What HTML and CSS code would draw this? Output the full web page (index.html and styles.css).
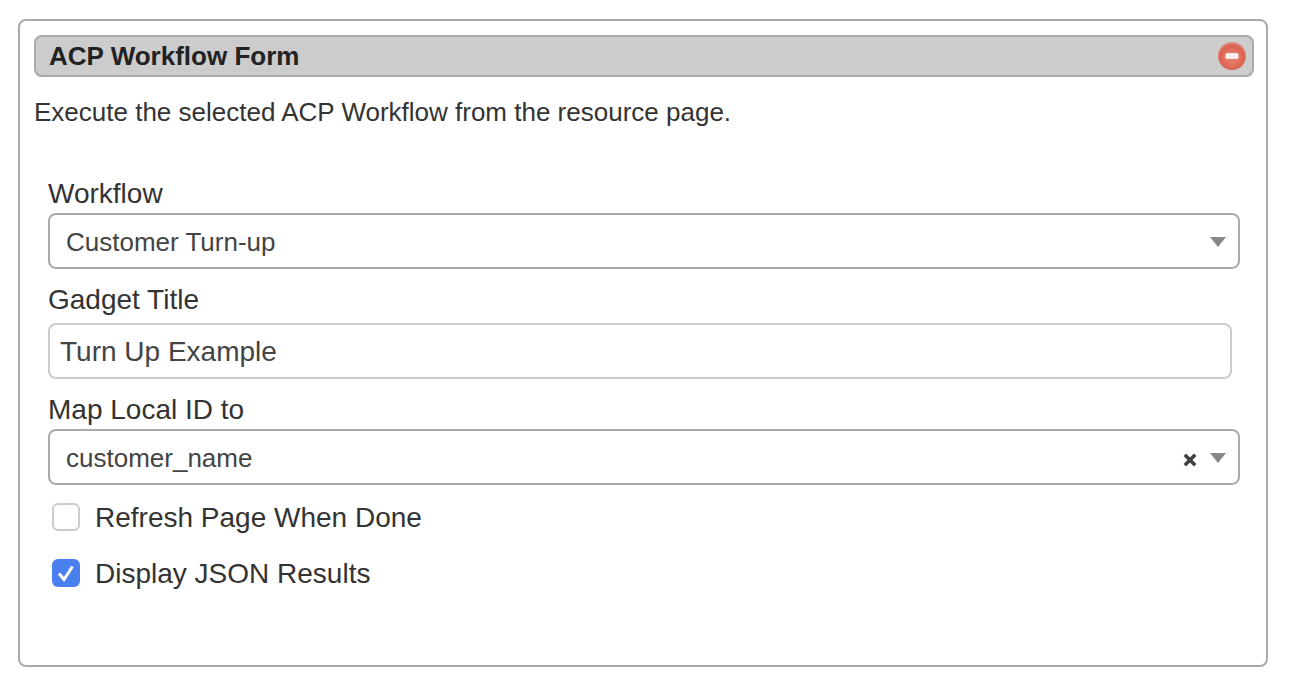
FILE: index.html
```html
<!DOCTYPE html>
<html lang="en">
<head>
<meta charset="utf-8">
<title>ACP Workflow Form</title>
<link rel="stylesheet" href="styles.css">
</head>
<body>
<section class="panel">
  <header class="panel-head">
    <h1 class="panel-title">ACP Workflow Form</h1>
    <svg class="remove" width="28" height="28" viewBox="0 0 28 28" aria-hidden="true">
      <defs>
        <radialGradient id="rg" cx="50%" cy="55%" r="52%">
          <stop offset="0" stop-color="#ec8272"/>
          <stop offset="0.55" stop-color="#e2705f"/>
          <stop offset="0.85" stop-color="#dc6151"/>
          <stop offset="1" stop-color="#dd8d80"/>
        </radialGradient>
      </defs>
      <circle cx="14" cy="14" r="14" fill="url(#rg)"/>
      <rect x="7.5" y="11" width="13" height="6" rx="1.5" fill="#fbeeec"/>
    </svg>
  </header>
  <p class="intro">Execute the selected ACP Workflow from the resource page.</p>
  <form class="fields">
    <label class="field-label first">Workflow</label>
    <div class="select">
      <span class="select-value">Customer Turn-up</span>
      <span class="caret"></span>
    </div>
    <label class="field-label roomy">Gadget Title</label>
    <div class="input"><span class="input-value">Turn Up Example</span></div>
    <label class="field-label tight">Map Local ID to</label>
    <div class="select">
      <span class="select-value">customer_name</span>
      <svg class="clear" width="14" height="14" viewBox="0 0 14 14" aria-hidden="true">
        <path d="M1.8 1.8 L12.2 12.2 M12.2 1.8 L1.8 12.2" stroke="#404040" stroke-width="3.6" fill="none"/>
      </svg>
      <span class="caret"></span>
    </div>
    <div class="check-row first-check">
      <span class="box"></span>
      <span class="check-label">Refresh Page When Done</span>
    </div>
    <div class="check-row">
      <span class="box checked">
        <svg width="28" height="28" viewBox="0 0 28 28" aria-hidden="true">
          <path d="M7 14.5 L12 20.5 L20.5 7.5" stroke="#fff" stroke-width="3" fill="none"/>
        </svg>
      </span>
      <span class="check-label">Display JSON Results</span>
    </div>
  </form>
</section>
</body>
</html>
```
FILE: styles.css
```css
* { box-sizing: border-box; }
html, body { margin: 0; padding: 0; background: #fff; }
body {
  width: 1302px;
  height: 694px;
  padding: 19px 34px 0 18px;
  overflow: hidden;
  font-family: "Liberation Sans", Arial, sans-serif;
  color: #333;
}
.panel {
  width: 1250px;
  height: 648px;
  border: 2px solid #aaa;
  border-radius: 8px;
  padding: 14px 12px 0 14px;
}
.panel-head {
  height: 42px;
  display: flex;
  align-items: center;
  justify-content: space-between;
  background: #ccc;
  border: 2px solid #aaa;
  border-radius: 8px;
  padding: 0 6px 0 13px;
}
.panel-title {
  margin: 0;
  font-size: 26px;
  font-weight: 700;
  color: #222;
}
.remove { display: block; }
.intro {
  margin: 19px 0 0;
  font-size: 26px;
  line-height: 32px;
  color: #333;
}
.fields {
  display: flex;
  flex-direction: column;
  align-items: flex-start;
  padding: 0 0 0 14px;
  margin-top: 49px;
}
.field-label {
  font-size: 28px;
  line-height: 34px;
}
.field-label.first { margin-bottom: 2px; }
.field-label.roomy { margin-top: 14px; margin-bottom: 6px; }
.field-label.tight { margin-top: 14px; margin-bottom: 2px; }
.select {
  width: 1192px;
  height: 56px;
  display: flex;
  align-items: center;
  border: 2px solid #aaa;
  border-radius: 8px;
  padding: 0 12px 0 16px;
  font-size: 26px;
  color: #444;
}
.select-value { flex: 1; padding-top: 2px; }
.clear { margin: 6px 13px 0 0; }
.caret {
  width: 0;
  height: 0;
  margin-top: 2px;
  border-left: 8px solid transparent;
  border-right: 8px solid transparent;
  border-top: 10px solid #888;
}
.input {
  width: 1184px;
  height: 56px;
  display: flex;
  align-items: center;
  border: 2px solid #ccc;
  border-radius: 8px;
  padding: 0 10px;
  font-size: 28px;
  color: #444;
}
.input-value { padding-top: 2px; }
.check-row {
  display: flex;
  align-items: center;
  height: 56px;
  padding-left: 4px;
  gap: 15px;
}
.check-row.first-check { margin-top: 4px; }
.check-label { font-size: 28px; padding-top: 2px; }
.box {
  width: 28px;
  height: 28px;
  border: 2px solid #ccc;
  border-radius: 6px;
  background: #fff;
  display: block;
}
.box.checked {
  border: 0;
  background: #4a7ff0;
}
.box.checked svg { display: block; }
```
